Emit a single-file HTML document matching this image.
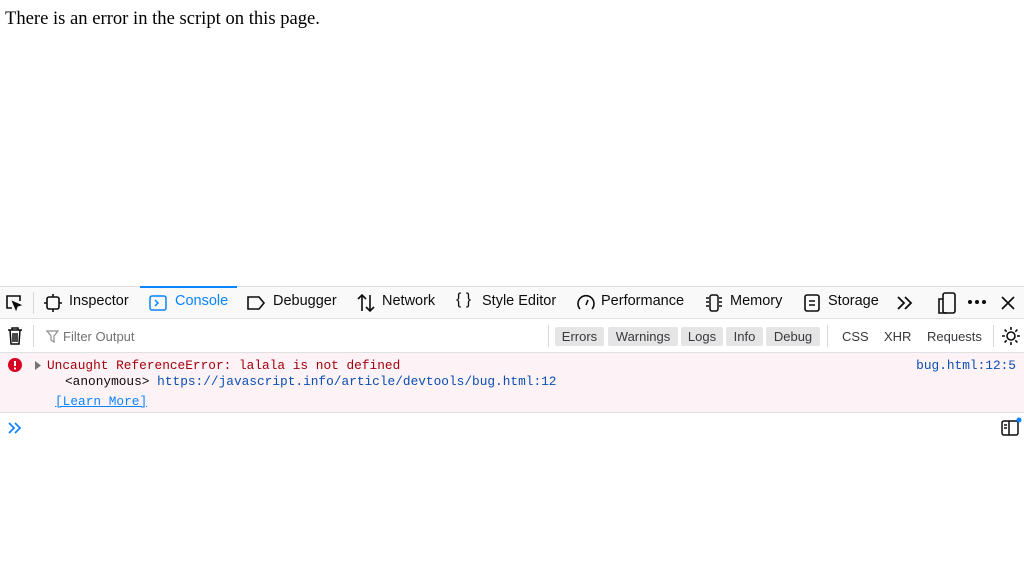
<!DOCTYPE html>
<html><head><meta charset="utf-8"><style>
*{margin:0;padding:0;box-sizing:border-box}
body{width:1024px;height:575px;background:#fff;position:relative;overflow:hidden;font-family:"Liberation Sans",sans-serif}
.a{position:absolute;white-space:nowrap}
.t{font-size:14.5px;color:#0c0c0d;top:293px}
.m{font-family:"Liberation Mono",monospace;font-size:12.8px}
.btn{position:absolute;top:327px;height:19px;background:#e5e5e6;border-radius:2px;font-size:13px;color:#38383d;line-height:19px;text-align:center}
.f{position:absolute;top:327px;font-size:13px;color:#38383d;line-height:19px}
svg{position:absolute}
</style></head><body>
<div class="a" style="left:5px;top:8px;font-family:'Liberation Serif',serif;font-size:18.6px;color:#000">There is an error in the script on this page.</div>

<div class="a" style="left:0;top:286px;width:1024px;height:33px;background:#f9f9fa;border-top:1px solid #e0e0e2;border-bottom:1px solid #e0e0e2"></div>
<div class="a" style="left:140px;top:286px;width:97px;height:2px;background:#0a84ff"></div>
<div class="a" style="left:33px;top:292px;width:1px;height:22px;background:#d7d7db"></div>

<svg style="left:5px;top:294px" width="18" height="18" viewBox="0 0 18 18" fill="none" stroke="#0c0c0d" stroke-width="1.6"><path d="M7 14H2V2h13v5"/><path d="M8 8l7 3-3 1-1 3z" fill="#0c0c0d"/></svg>
<svg style="left:44px;top:294px" width="18" height="18" viewBox="0 0 18 18" fill="none" stroke="#0c0c0d" stroke-width="1.6"><rect x="3" y="3" width="12" height="12" rx="2"/><path d="M9 0v3M9 15v3M0 9h3M15 9h3"/></svg>
<div class="a t" style="left:69px">Inspector</div>
<svg style="left:149px;top:294px" width="18" height="18" viewBox="0 0 18 18" fill="none" stroke="#0a84ff" stroke-width="1.5"><rect x="1" y="2" width="16" height="14" rx="2"/><path d="M6 6l3 3-3 3"/></svg>
<div class="a t" style="left:175px;color:#0a84ff">Console</div>
<svg style="left:246px;top:294px" width="20" height="18" viewBox="0 0 20 18" fill="none" stroke="#0c0c0d" stroke-width="1.6"><path d="M2 3h11l5 6-5 6H2z"/></svg>
<div class="a t" style="left:273px">Debugger</div>
<svg style="left:356px;top:293px" width="20" height="20" viewBox="0 0 20 20" fill="none" stroke="#0c0c0d" stroke-width="1.6"><path d="M6 18V2M2 6l4-4 4 4M14 2v16M10 14l4 4 4-4"/></svg>
<div class="a t" style="left:382px">Network</div>
<div class="a t" style="left:456px;font-size:16px;top:291px">{ }</div>
<div class="a t" style="left:482px">Style Editor</div>
<svg style="left:576px;top:293px" width="20" height="18" viewBox="0 0 20 18" fill="none" stroke="#0c0c0d" stroke-width="1.6"><path d="M4 16A8 8 0 1 1 16 16"/><path d="M10 12l2-5"/></svg>
<div class="a t" style="left:601px">Performance</div>
<svg style="left:704px;top:293px" width="20" height="20" viewBox="0 0 20 20" fill="none" stroke="#0c0c0d" stroke-width="1.5"><rect x="6" y="2" width="8" height="16" rx="2"/><path d="M2 5h3M2 9h3M2 13h3M15 5h3M15 9h3M15 13h3"/></svg>
<div class="a t" style="left:730px">Memory</div>
<svg style="left:803px;top:293px" width="18" height="20" viewBox="0 0 18 20" fill="none" stroke="#0c0c0d" stroke-width="1.6"><rect x="2" y="2" width="14" height="16" rx="2"/><path d="M6 8h6M6 12h6"/></svg>
<div class="a t" style="left:828px">Storage</div>
<svg style="left:896px;top:294px" width="18" height="18" viewBox="0 0 18 18" fill="none" stroke="#0c0c0d" stroke-width="1.8"><path d="M2 3l6 6-6 6M9 3l6 6-6 6"/></svg>
<svg style="left:937px;top:292px" width="20" height="22" viewBox="0 0 20 22" fill="none" stroke="#0c0c0d" stroke-width="1.6"><rect x="6" y="1" width="12" height="20" rx="2"/><path d="M6 7H2v14h8"/></svg>
<svg style="left:967px;top:299px" width="22" height="6" viewBox="0 0 22 6" fill="#0c0c0d"><circle cx="3" cy="3" r="2"/><circle cx="10" cy="3" r="2"/><circle cx="17" cy="3" r="2"/></svg>
<svg style="left:1000px;top:295px" width="16" height="16" viewBox="0 0 16 16" stroke="#0c0c0d" stroke-width="1.6"><path d="M2 2l12 12M14 2L2 14"/></svg>

<svg style="left:7px;top:327px" width="16" height="18" viewBox="0 0 16 18" fill="none" stroke="#0c0c0d" stroke-width="1.5"><path d="M1 3h14M5 3V1h6v2M3 3l1 14h8l1-14M6 6v9M8 6v9M10 6v9"/></svg>
<div class="a" style="left:33px;top:325px;width:1px;height:22px;background:#d7d7db"></div>
<svg style="left:46px;top:330px" width="13" height="13" viewBox="0 0 13 13" fill="none" stroke="#8e8e93" stroke-width="1.2"><path d="M1 1h11L8 6v6L5 10V6z"/></svg>
<div class="a" style="left:63px;top:329px;font-size:13px;color:#737373">Filter Output</div>
<div class="a" style="left:548px;top:325px;width:1px;height:22px;background:#d7d7db"></div>
<div class="btn" style="left:555px;width:49px">Errors</div>
<div class="btn" style="left:608px;width:70px">Warnings</div>
<div class="btn" style="left:681px;width:42px">Logs</div>
<div class="btn" style="left:726px;width:37px">Info</div>
<div class="btn" style="left:766px;width:54px">Debug</div>
<div class="a" style="left:827px;top:325px;width:1px;height:22px;background:#d7d7db"></div>
<div class="f" style="left:842px">CSS</div>
<div class="f" style="left:884px">XHR</div>
<div class="f" style="left:927px">Requests</div>
<div class="a" style="left:993px;top:325px;width:1px;height:22px;background:#d7d7db"></div>
<svg style="left:1001px;top:326px" width="20" height="20" viewBox="0 0 20 20" fill="none" stroke="#0c0c0d" stroke-width="1.6"><circle cx="10" cy="10" r="4"/><path d="M10 1v3M10 16v3M1 10h3M16 10h3M3.6 3.6l2.1 2.1M14.3 14.3l2.1 2.1M3.6 16.4l2.1-2.1M14.3 5.7l2.1-2.1"/></svg>
<div class="a" style="left:0;top:352px;width:1024px;height:1px;background:#e0e0e2"></div>

<div class="a" style="left:0;top:353px;width:1024px;height:60px;background:#fdf2f5;border-bottom:1px solid #e0e0e2"></div>
<svg style="left:8px;top:358px" width="14" height="14" viewBox="0 0 14 14"><circle cx="7" cy="7" r="7" fill="#d70022"/><path d="M7 3v5" stroke="#fff" stroke-width="2"/><circle cx="7" cy="10.5" r="1.1" fill="#fff"/></svg>
<svg style="left:35px;top:361px" width="7" height="9" viewBox="0 0 7 9"><path d="M0 0l6 4.5L0 9z" fill="#737373"/></svg>
<div class="a m" style="left:47px;top:358px;color:#a4000f">Uncaught ReferenceError: lalala is not defined</div>
<div class="a m" style="left:65px;top:374px;color:#0c0c0d">&lt;anonymous&gt; <span style="color:#0a4fb4">https://javascript.info/article/devtools/bug.html:12</span></div>
<div class="a m" style="left:55px;top:394px;color:#0a84ff;text-decoration:underline">[Learn More]</div>
<div class="a m" style="right:8px;top:358px;color:#0a4fb4">bug.html:12:5</div>

<svg style="left:8px;top:422px" width="14" height="12" viewBox="0 0 14 12" fill="none" stroke="#0a84ff" stroke-width="1.7"><path d="M1 1l5 5-5 5M7 1l5 5-5 5"/></svg>
<svg style="left:1000px;top:417px" width="22" height="20" viewBox="0 0 22 20" fill="none" stroke="#0c0c0d" stroke-width="1.5"><rect x="2" y="4" width="16" height="14" rx="2"/><path d="M9 4v14M4 8h3M4 11h3"/><circle cx="19" cy="3" r="2.5" fill="#0a84ff" stroke="none"/></svg>
</body></html>
